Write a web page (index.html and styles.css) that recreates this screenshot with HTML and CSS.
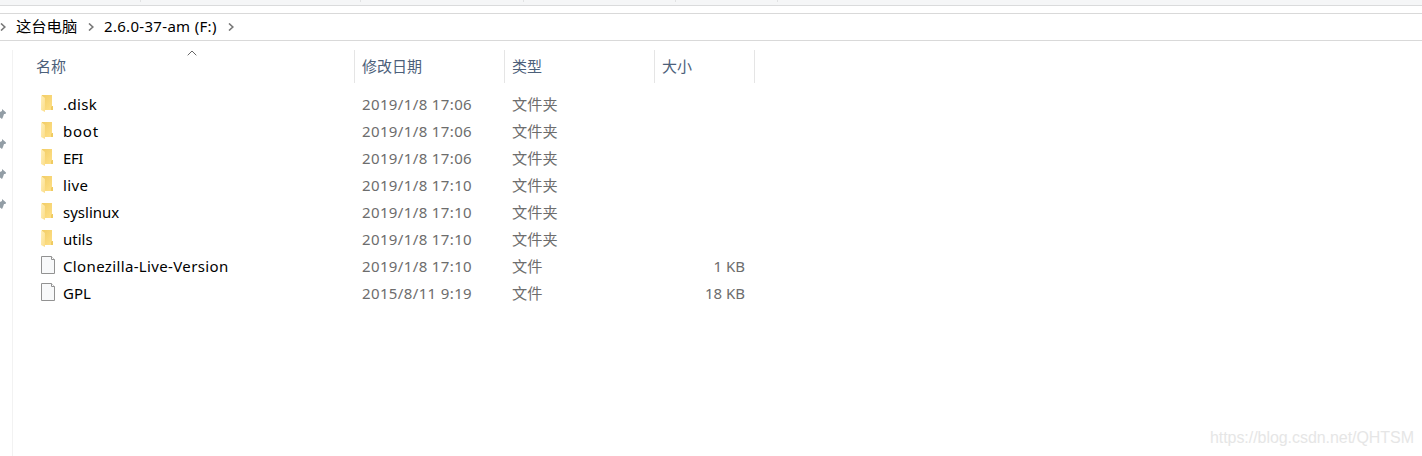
FILE: index.html
```
<!DOCTYPE html>
<html lang="zh-CN">
<head>
<meta charset="utf-8">
<title>2.6.0-37-am (F:)</title>
<link rel="stylesheet" href="styles.css">
</head>
<body>
<svg class="defs" width="0" height="0">
  <defs>
    <linearGradient id="back" x1="0" y1="0" x2="1" y2="1"><stop offset="0" stop-color="#f2cd66"/><stop offset="1" stop-color="#ffe18a"/></linearGradient>
    <linearGradient id="flap" x1="0" y1="0" x2="1" y2="1"><stop offset="0" stop-color="#fff0bd"/><stop offset="1" stop-color="#fbdd88"/></linearGradient>
    <symbol id="folder" viewBox="0 0 16 20">
      <path d="M2 2h10v11h1v4H2z" fill="url(#back)"/>
      <path d="M12 13h1v4h-2v-3z" fill="#efcb62"/>
      <path d="M1 2l4 3v14l-4-2z" fill="url(#flap)"/>
    </symbol>
    <symbol id="file" viewBox="0 0 16 20">
      <path d="M1.5 1.5h10l3 3v14h-13z" fill="#f8f9fa" stroke="#929292"/>
      <path d="M11.5 1.500v3h3" fill="#fff" stroke="#929292"/>
    </symbol>
    <symbol id="pin" viewBox="0 0 6 14">
      <path d="M0 4L2 3V1L6 4.500L5.500 6H4L3 9L2 11L0 9.500z" fill="#929da5"/>
    </symbol>
    <symbol id="chevron" viewBox="0 0 6 8"><path d="M1 .5L4.800 4L1 7.500" fill="none" stroke="#777" stroke-width="1.600"/></symbol>
  </defs>
</svg>
<div class="ribbon"><i></i><i></i><i></i><i></i><i></i></div>
<nav class="address">
  <svg class="chev"><use href="#chevron"/></svg>
  <span class="crumb pc">这台电脑</span>
  <svg class="chev"><use href="#chevron"/></svg>
  <span class="crumb drive">2.6.0-37-am (F:)</span>
  <svg class="chev"><use href="#chevron"/></svg>
</nav>
<div class="explorer">
  <aside class="sidebar">
    <svg class="pin"><use href="#pin"/></svg><svg class="pin"><use href="#pin"/></svg><svg class="pin"><use href="#pin"/></svg><svg class="pin"><use href="#pin"/></svg>
  </aside>
  <main class="list">
    <header class="head">
      <span class="name">名称<svg class="sort" viewBox="0 0 10 6"><path d="M.7 5.300L5 1L9.300 5.300" fill="none" stroke="#666"/></svg></span><span>修改日期</span><span>类型</span><span>大小</span>
    </header>
    <div class="row"><svg class="icon"><use href="#folder"/></svg><b class="loose">.disk</b><time>2019/1/8 17:06</time><span class="type">文件夹</span></div>
    <div class="row"><svg class="icon"><use href="#folder"/></svg><b class="looser">boot</b><time>2019/1/8 17:06</time><span class="type">文件夹</span></div>
    <div class="row"><svg class="icon"><use href="#folder"/></svg><b class="tight">EFI</b><time>2019/1/8 17:06</time><span class="type">文件夹</span></div>
    <div class="row"><svg class="icon"><use href="#folder"/></svg><b class="loose">live</b><time>2019/1/8 17:10</time><span class="type">文件夹</span></div>
    <div class="row"><svg class="icon"><use href="#folder"/></svg><b>syslinux</b><time>2019/1/8 17:10</time><span class="type">文件夹</span></div>
    <div class="row"><svg class="icon"><use href="#folder"/></svg><b>utils</b><time>2019/1/8 17:10</time><span class="type">文件夹</span></div>
    <div class="row"><svg class="icon"><use href="#file"/></svg><b class="loose">Clonezilla-Live-Version</b><time>2019/1/8 17:10</time><span class="type">文件</span><span class="size">1 KB</span></div>
    <div class="row"><svg class="icon"><use href="#file"/></svg><b>GPL</b><time>2015/8/11 9:19</time><span class="type">文件</span><span class="size">18 KB</span></div>
  </main>
</div>
<div class="watermark">https://blog.csdn.net/QHTSM</div>
</body>
</html>
```
FILE: styles.css
```
* { box-sizing: border-box; }
body {
  margin: 0;
  height: 456px;
  overflow: hidden;
  display: flex;
  flex-direction: column;
  background: #fff;
  font: 15px/27px "Noto Sans", "Noto Sans CJK SC", sans-serif;
  color: #000;
}
svg { display: block; flex: none; }
.defs { position: absolute; }
.ribbon {
  height: 6px;
  flex: none;
  display: grid;
  grid-template-columns: 141px 220px 163px 152px 102px;
  background: #f5f6f7;
  border-bottom: 1px solid #dadbdc;
}
.ribbon i { height: 2px; border-right: 1px solid #e2e3e4; }
.address {
  height: 28px;
  flex: none;
  margin-top: 7px;
  padding-bottom: 1px;
  display: flex;
  align-items: center;
  border: solid #d9d9d9;
  border-width: 1px 0;
  line-height: 25px;
}
.chev { width: 6px; height: 8px; }
.crumb { white-space: nowrap; }
.pc { width: 82px; padding-left: 10px; font-size: 15.3px; }
.drive { width: 134px; padding-left: 10px; letter-spacing: .31px; }
.explorer { flex: 1; display: flex; }
.sidebar {
  width: 13px;
  margin-top: 9px;
  padding-top: 58px;
  display: flex;
  flex-direction: column;
  gap: 16px;
  border-right: 1px solid #f2f2f2;
}
.pin { width: 6px; height: 14px; }
.list { padding-top: 9px; }
.head {
  height: 32px;
  margin-bottom: 9px;
  display: grid;
  grid-template-columns: 342px 150px 150px 100px;
  line-height: 33px;
  color: #4c607a;
}
.head span { padding-left: 7px; border-right: 1px solid #e5e5e5; }
.head .name { position: relative; padding-left: 23px; }
.sort { position: absolute; left: 174px; top: 0; width: 10px; height: 6px; }
.row {
  height: 27px;
  display: grid;
  grid-template-columns: 23px 299px 150px 133px 100px;
  padding-left: 27px;
  color: #6d6d6d;
  white-space: nowrap;
}
.icon { width: 16px; height: 20px; margin-top: 2px; }
.row b { font-weight: 400; color: #000; }
.row .loose { letter-spacing: .36px; }
.row .looser { letter-spacing: .75px; }
.row .tight { letter-spacing: -.4px; }
.row time { letter-spacing: .37px; }
.type { font-size: 15.2px; }
.size { text-align: right; }
.watermark {
  position: absolute;
  right: 8px;
  bottom: 8px;
  font: 16px/20px "Liberation Sans", sans-serif;
  letter-spacing: -.05px;
  color: #e6e6e6;
}
```
